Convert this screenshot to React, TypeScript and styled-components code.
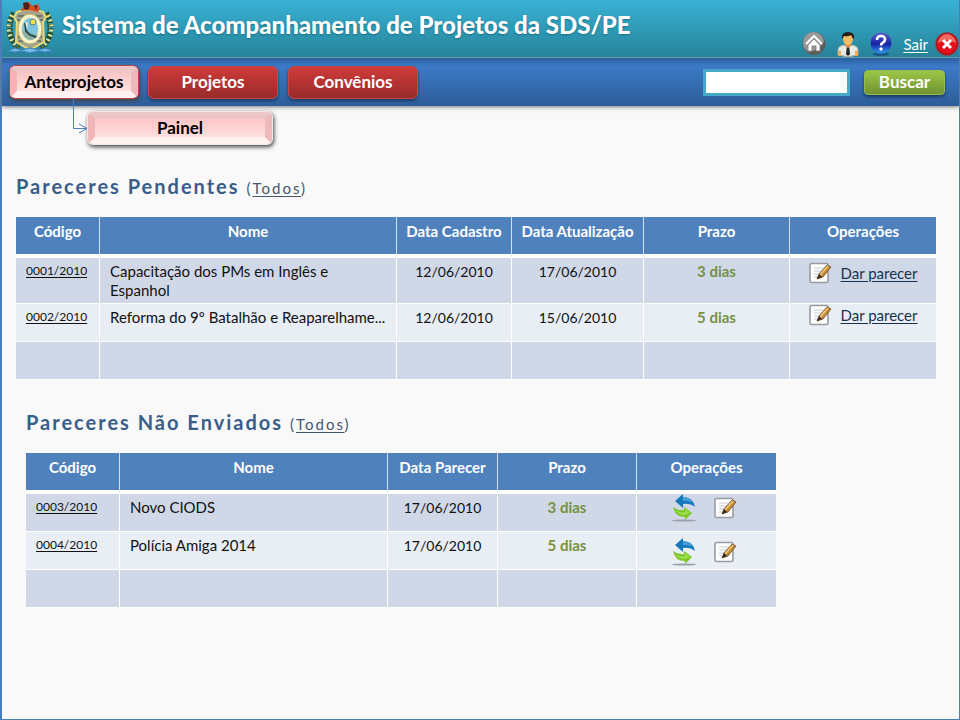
import React from "react";
import styled, { createGlobalStyle, css } from "styled-components";

const GlobalStyle = createGlobalStyle`
  *, *::before, *::after { box-sizing: border-box; }
  body { margin: 0; background: #f9f9f9; font-family: Lato, "Open Sans", sans-serif; color: #111; }
  a { color: inherit; text-underline-offset: 2px; }
  button, input { font-family: inherit; }
`;

const Page = styled.div`
  min-height: 100vh;
  border: solid #4a7ebb;
  border-width: 0 1px 1px 2px;
`;

const Header = styled.header`
  display: flex;
  align-items: flex-start;
  height: 58px;
  padding-left: 3px;
  background: linear-gradient(#39b2d5, #268399);
  border-bottom: 1px solid #62a9c4;
`;

const Title = styled.h1`
  flex: 1;
  margin: 8px 0 0 7px;
  font-size: 24px;
  line-height: 34px;
  font-weight: 900;
  white-space: nowrap;
  color: #fff;
  text-shadow: 0 1px 2px #1c6f86;
`;

const Tools = styled.div`
  display: flex;
  align-items: center;
  margin-top: 30px;
  height: 27px;
`;

const ToolButton = styled.button<{ $gap?: number }>`
  display: flex;
  margin: 0 ${(p) => p.$gap ?? 8}px 0 0;
  padding: 0;
  border: 0;
  background: none;
  cursor: pointer;
`;

const Logout = styled.a`
  margin-right: 7px;
  font-size: 15px;
  color: #fff;
`;

const Nav = styled.nav`
  display: flex;
  align-items: center;
  gap: 10px;
  height: 48px;
  padding: 0 14px 0 8px;
  background: linear-gradient(#2c5f9e, #3c7ac7 8px, #2c5d98);
  box-shadow: 0 1px 4px #777;
`;

const buttonText = css`
  padding: 0;
  font-size: 17px;
  line-height: 18px;
  font-weight: 700;
  cursor: pointer;
`;

const Tab = styled.button`
  ${buttonText}
  width: 130px;
  height: 33px;
  color: #fff;
  border: 1px solid #c4484a;
  border-radius: 6px;
  background: linear-gradient(#cf3c3b, #982b29);
  box-shadow: 0 2px 3px #1d3c68;
`;

const BevelTab = styled.button<{ $sub?: boolean }>`
  ${buttonText}
  width: ${(p) => (p.$sub ? 184 : 128)}px;
  height: 32px;
  color: #000;
  border: 7px solid;
  border-color: #ecc6c6 #eeb9ba #fff1f0 #f0b6b7;
  border-radius: 5px;
  background: linear-gradient(#fbc6c7, #ffe0df) padding-box;
  box-shadow: 0 0 0 1px ${(p) => (p.$sub ? "#f1e6e6" : "#b9474c")}, 1px 2px 4px 1px #444;
`;

const SearchForm = styled.form`
  display: flex;
  align-items: center;
  gap: 14px;
  margin-left: auto;
`;

const SearchInput = styled.input`
  width: 147px;
  height: 27px;
  padding: 0 6px;
  border: 3px solid #46a9c8;
  background: #fff;
  font-size: 15px;
`;

const SearchButton = styled.button`
  ${buttonText}
  width: 81px;
  height: 25px;
  color: #fff;
  border: 1px solid #94bb51;
  border-radius: 4px;
  background: linear-gradient(#9bc648, #71932f);
  box-shadow: 0 2px 3px #1d3c68;
`;

const SubMenu = styled.div`
  position: relative;
  padding: 6px 0 0 86px;
`;

const Connector = styled.svg`
  position: absolute;
  left: 70px;
  top: -8px;
`;

const Section = styled.section<{ $inset?: boolean }>`
  padding: ${(p) => (p.$inset ? "28px 24px 0 24px" : "28px 23px 0 14px")};
`;

const Heading = styled.h2`
  margin: 0 0 15px 0;
  font-size: 20px;
  line-height: 28px;
  font-weight: 700;
  letter-spacing: 2px;
  color: #385d8a;
`;

const All = styled.span`
  font-size: 15px;
  font-weight: 400;
  color: #44566f;
`;

const Table = styled.table<{ $max?: number }>`
  width: 100%;
  max-width: ${(p) => (p.$max ? `${p.$max}px` : "none")};
  table-layout: fixed;
  border-collapse: separate;
  border-spacing: 0;
  font-size: 15px;
  line-height: 19px;
`;

const Th = styled.th<{ $width: number }>`
  width: ${(p) => p.$width}px;
  height: 41px;
  padding: 5px 0 0;
  vertical-align: top;
  color: #fff;
  background: #4f81bd;
  white-space: nowrap;
  border-bottom: 4px solid #fff;
  border-right: 1px solid #d3dfee;
  &:last-child { border-right: 0; }
`;

const Row = styled.tr`
  background: #d0d8e8;
  &:nth-child(even) { background: #e9edf4; }
`;

const Td = styled.td<{ $center?: boolean }>`
  height: 38px;
  padding: 4px 10px 3px;
  vertical-align: top;
  text-align: ${(p) => (p.$center ? "center" : "left")};
  border-bottom: 1px solid #fff;
  border-right: 1px solid #fff;
  &:last-child { border-right: 0; padding: 0; }
`;

const DateCell = styled(Td)`
  font-size: 14px;
`;

const CodeLink = styled.a`
  display: block;
  font-size: 12px;
  line-height: 17px;
`;

const Due = styled.strong`
  color: #76923c;
`;

const Actions = styled.div<{ $drop: number }>`
  display: flex;
  align-items: center;
  justify-content: center;
  gap: 9px;
  padding-top: ${(p) => p.$drop}px;
`;

const WideActions = styled(Actions)`
  gap: 18px;
  padding-right: 4px;
`;

const ActionLink = styled.a`
  color: #17304f;
`;

const Crest = () => (
  <svg width="50" height="54" viewBox="0 0 50 54" role="img" aria-label="Brasão">
    <path d="M9 13C2 24 3 39 14 48M41 13c7 11 6 26-5 35" fill="none" stroke="#2e4d25" strokeWidth="6" strokeDasharray="3 1" />
    <path d="M7 15C1 25 3 39 13 47M43 15c6 10 4 24-6 32" fill="none" stroke="#dbe3a4" strokeWidth="4" strokeDasharray="2 3" />
    <path d="M12 12q13-5 26 0l3 5-3 5 1 20-7 4-7 4-7-4-7-4 1-20-3-5z" fill="#a5a58d" stroke="#e8dc79" strokeWidth="2" />
    <path d="M13 16h24M12 20h26M13 37h24M14 41h22" stroke="#6d7477" strokeWidth="2" />
    <ellipse cx="25" cy="29" rx="12" ry="15" fill="#efe9b8" stroke="#c3b26a" />
    <ellipse cx="25" cy="29" rx="10" ry="13" fill="none" stroke="#fffbe4" strokeWidth="2" strokeDasharray="2 1" />
    <ellipse cx="25" cy="29" rx="8" ry="11" fill="#7cc4de" />
    <path d="M17 31q5-1 8 2l8 2q-2 5-8 5-7-2-8-9" fill="#8fb2a0" />
    <path d="M20 23l1 8 4 4 6 2" fill="none" stroke="#2c4a50" strokeWidth="2" />
    <path d="M20 22l3 1-1 7z" fill="#d9e9dd" />
    <circle cx="28" cy="22" r="3" fill="#f1df54" stroke="#54808b" />
    <path d="M16 11q1-5 6-4l-2-4 4-1 3 4 6-2 2 5-2 3q-8-3-17-1" fill="#d94a20" />
    <path d="M18 3l4-1 3 3-2 5-4-1zM29 5l3 1-1 4" fill="#4a2018" />
    <path d="M2 51l8-3 6 2 9-2 9 2 6-2 8 3-8 1-7-1-8 2-8-2-7 1z" fill="#75b9e7" stroke="#397fb8" />
  </svg>
);

const HomeIcon = () => (
  <svg width="24" height="25" viewBox="0 0 24 25">
    <circle cx="12" cy="12.5" r="11.5" fill="#666" />
    <circle cx="11.500" cy="11.500" r="10.500" fill="#999" />
    <path d="M23 9q2 9-6 14-7 3-12-2Q18 20 23 9" fill="#5c5c5c" />
    <path d="M4 13l8-8 8 8" fill="none" stroke="#fff" strokeWidth="2" />
    <path d="M6 14l6-6 6 6v6h-4v-5h-4v5H6z" fill="#fff" stroke="#777" strokeWidth=".8" />
  </svg>
);

const UserIcon = () => (
  <svg width="22" height="26" viewBox="0 0 22 26">
    <path d="M1 24v-5q0-4 6-5l4 2 4-2q6 1 6 5v5q-10 3-20 0" fill="#e8e8e5" stroke="#a9aaa8" />
    <path d="M1 20h3v5H1zM18 20h3v5h-3z" fill="#e8ad58" />
    <path d="M10 15h2l1 8-2 2-2-2z" fill="#222" />
    <path d="M8 12h6v3l-3 2-3-2z" fill="#d89a46" />
    <ellipse cx="11" cy="8" rx="5" ry="6" fill="#f5bd67" />
    <path d="M5 8q-1-7 6-7t6 7q-2-1-3-4-3 2-7 1z" fill="#24211d" />
  </svg>
);

const HelpIcon = () => (
  <svg width="22" height="24" viewBox="0 0 22 24">
    <defs><linearGradient id="helpFill" x2="0" y2="1"><stop stopColor="#5762cd" /><stop offset=".55" stopColor="#1822a5" /><stop offset="1" stopColor="#2e9cf5" /></linearGradient></defs>
    <ellipse cx="11" cy="22" rx="8" ry="2" fill="#1b5b85" />
    <circle cx="11" cy="11" r="10.5" fill="url(#helpFill)" />
    <path d="M7 8q0-4 4-4t4 3.500q0 2-2 3t-2 3" fill="none" stroke="#fff" strokeWidth="2.600" />
    <circle cx="11" cy="17" r="1.700" fill="#fff" />
  </svg>
);

const CloseIcon = () => (
  <svg width="24" height="26" viewBox="0 0 24 26">
    <circle cx="12" cy="13" r="11.500" fill="#a90b12" stroke="#7c5961" />
    <circle cx="12" cy="13" r="10" fill="#e5101e" />
    <path d="M3 12a9 9 0 0118 0q-9-5-18 0" fill="#f3675f" />
    <path d="M8 9l8 8M16 9l-8 8" stroke="#fff" strokeWidth="3" />
  </svg>
);

const EditIcon = () => (
  <svg width="23" height="22" viewBox="0 0 23 22">
    <rect x="1" y="1.5" width="18" height="19" rx="1.5" fill="#fff" stroke="#999ba0" strokeWidth="1.6" />
    <path d="M5 6h9M5 9h8M5 12h5M5 15h3" stroke="#c8cacc" />
    <path d="M8 17l2-5L18 3l4 2-8 10z" fill="#c68c38" stroke="#6b481e" strokeWidth=".8" />
    <path d="M11 13l8-9" stroke="#f1cb7e" strokeWidth="1.5" />
    <path d="M8 17l2-5 3 3z" fill="#36291e" />
  </svg>
);

const SyncIcon = () => (
  <svg width="24" height="28" viewBox="0 0 24 28">
    <ellipse cx="12" cy="26.5" rx="12" ry="1" fill="#9aa0aa" />
    <path d="M3 7l8-7v3q10 0 12 10-5-4-12-3v4z" fill="#1478bd" />
    <path d="M11 3q7 1 10 6-5-3-10-2z" fill="#4aa0da" />
    <path d="M1 13q5 4 11 3v-3l8 6-7 7v-3Q3 23 1 13" fill="#7ac623" />
    <path d="M3 16q5 3 10 2v-3l5 4-5 2Q6 21 3 16" fill="#9ddd4c" />
  </svg>
);

type Item = { code: string; name?: string; dates: string[]; due: string; drop: number };

const pending: Item[] = [
  { code: "0001/2010", name: "Capacitação dos PMs em Inglês e Espanhol", dates: ["12/06/2010", "17/06/2010"], due: "3 dias", drop: 4 },
  { code: "0002/2010", name: "Reforma do 9º Batalhão e Reaparelhame...", dates: ["12/06/2010", "15/06/2010"], due: "5 dias", drop: 0 },
];
const unsent: Item[] = [
  { code: "0003/2010", name: "Novo CIODS", dates: ["17/06/2010"], due: "3 dias", drop: 0 },
  { code: "0004/2010", name: "Polícia Amiga 2014", dates: ["17/06/2010"], due: "5 dias", drop: 6 },
];

type Column = [string, number];
const pendingColumns: Column[] = [["Código", 84], ["Nome", 297], ["Data Cadastro", 115], ["Data Atualização", 132], ["Prazo", 146], ["Operações", 146]];
const unsentColumns: Column[] = [["Código", 94], ["Nome", 268], ["Data Parecer", 110], ["Prazo", 139], ["Operações", 139]];

function Opinions({ columns, items, max, children }: { columns: Column[]; items: Item[]; max?: number; children: (item: Item) => React.ReactNode }) {
  return (
    <Table $max={max}>
      <thead><tr>{columns.map(([label, width]) => <Th key={label} $width={width}>{label}</Th>)}</tr></thead>
      <tbody>
        {items.map((item) => (
          <Row key={item.code}>
            <Td><CodeLink href="#">{item.code}</CodeLink></Td>
            <Td>{item.name}</Td>
            {item.dates.map((d) => <DateCell key={d} $center>{d}</DateCell>)}
            <Td $center><Due>{item.due}</Due></Td>
            <Td>{children(item)}</Td>
          </Row>
        ))}
        <Row>{columns.map(([label]) => <Td key={label} />)}</Row>
      </tbody>
    </Table>
  );
}

export default function App() {
  return (
    <Page>
      <GlobalStyle />
      <Header>
        <Crest />
        <Title>Sistema de Acompanhamento de Projetos da SDS/PE</Title>
        <Tools>
          <ToolButton aria-label="Início" $gap={11}><HomeIcon /></ToolButton>
          <ToolButton aria-label="Usuário" $gap={11}><UserIcon /></ToolButton>
          <ToolButton aria-label="Ajuda" $gap={11}><HelpIcon /></ToolButton>
          <Logout href="#">Sair</Logout>
          <ToolButton aria-label="Fechar" $gap={0}><CloseIcon /></ToolButton>
        </Tools>
      </Header>
      <Nav>
        <BevelTab>Anteprojetos</BevelTab>
        <Tab>Projetos</Tab>
        <Tab>Convênios</Tab>
        <SearchForm onSubmit={(e) => e.preventDefault()}>
          <SearchInput type="search" aria-label="Buscar" />
          <SearchButton>Buscar</SearchButton>
        </SearchForm>
      </Nav>
      <SubMenu>
        <Connector width="16" height="36" viewBox="0 0 16 36" fill="none" stroke="#4a7ebb">
          <path d="M1.500 0V30.500H15M7 26l8 4.500L7 35" />
        </Connector>
        <BevelTab $sub>Painel</BevelTab>
      </SubMenu>
      <Section>
        <Heading>Pareceres Pendentes <All>(<a href="#">Todos</a>)</All></Heading>
        <Opinions columns={pendingColumns} items={pending}>
          {(item) => <Actions $drop={item.drop}><EditIcon /><ActionLink href="#">Dar parecer</ActionLink></Actions>}
        </Opinions>
      </Section>
      <Section $inset>
        <Heading>Pareceres Não Enviados <All>(<a href="#">Todos</a>)</All></Heading>
        <Opinions columns={unsentColumns} items={unsent} max={750}>
          {(item) => (
            <WideActions $drop={item.drop}>
              <ToolButton aria-label="Reenviar" $gap={0}><SyncIcon /></ToolButton>
              <ToolButton aria-label="Editar" $gap={0}><EditIcon /></ToolButton>
            </WideActions>
          )}
        </Opinions>
      </Section>
    </Page>
  );
}
